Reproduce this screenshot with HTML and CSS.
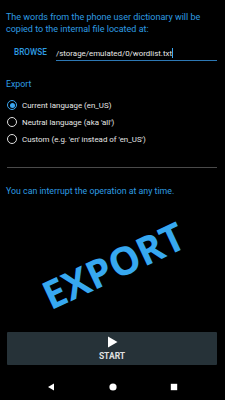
FILE: index.html
```html
<!DOCTYPE html>
<html>
<head>
<meta charset="utf-8">
<link rel="stylesheet" href="styles.css">
</head>
<body>
<div class="screen">
  <div class="content">
    <p class="intro">The words from the phone user dictionary will be copied to the internal file located at:</p>
    <div class="browse-row">
      <span class="browse">BROWSE</span>
      <span class="path">/storage/emulated/0/wordlist.txt<span class="caret"></span></span>
    </div>
    <div class="section">Export</div>
    <div class="radios">
      <div class="radio-row"><span class="radio checked"></span><span class="label">Current language (en_US)</span></div>
      <div class="radio-row"><span class="radio"></span><span class="label">Neutral language (aka 'all')</span></div>
      <div class="radio-row"><span class="radio"></span><span class="label">Custom (e.g. 'en' instead of 'en_US')</span></div>
    </div>
    <div class="divider"></div>
    <p class="note">You can interrupt the operation at any time.</p>
  </div>
  <div class="art"><span class="export">EXPORT</span></div>
  <div class="start">
    <svg class="play" width="11" height="12" viewBox="0 0 11 12"><path d="M1 0.5 L10.5 6 L1 11.5 Z" fill="#ffffff"/></svg>
    <span class="start-label">START</span>
  </div>
  <div class="nav">
    <svg width="8" height="8" viewBox="0 0 8 8"><path d="M7 0.5 L7 7.5 L1 4 Z" fill="#ffffff"/></svg>
    <svg width="8" height="8" viewBox="0 0 8 8"><circle cx="4" cy="4" r="3.6" fill="#ffffff"/></svg>
    <svg width="8" height="8" viewBox="0 0 8 8"><rect x="0.8" y="0.8" width="6.4" height="6.4" fill="#ffffff"/></svg>
  </div>
</div>
</body>
</html>
```
FILE: styles.css
```css
html, body {
  margin: 0;
  padding: 0;
  background: #000;
}
.screen {
  width: 225px;
  height: 400px;
  display: flex;
  flex-direction: column;
  font-family: Roboto, "Liberation Sans", sans-serif;
  overflow: hidden;
}
.content {
  padding: 11px 8px 0 6px;
}
.intro {
  margin: 0;
  color: #2e9de2;
  font-size: 9px;
  line-height: 12px;
}
.browse-row {
  display: flex;
  align-items: center;
  margin-top: 9px;
  height: 16px;
}
.browse {
  color: #2e9de2;
  font-size: 8.2px;
  font-weight: 500;
  width: 50px;
  padding-left: 8px;
  box-sizing: border-box;
}
.path {
  flex: 1;
  color: #e8e8e8;
  font-size: 7.9px;
  line-height: 13px;
  border-bottom: 1px solid #2d78b4;
  margin-top: 3px;
  display: flex;
  align-items: center;
}
.caret {
  display: inline-block;
  width: 1px;
  height: 10px;
  background: #3ba6f0;
}
.section {
  color: #2e9de2;
  font-size: 8.8px;
  margin-top: 18px;
  line-height: 12px;
}
.radios {
  margin-top: 9px;
  display: flex;
  flex-direction: column;
  gap: 5px;
  padding-left: 1px;
}
.radio-row {
  display: flex;
  align-items: center;
  height: 12px;
}
.radio {
  width: 8px;
  height: 8px;
  border: 1.6px solid #e0e0e0;
  border-radius: 50%;
  margin-right: 5px;
  position: relative;
  flex: none;
}
.radio.checked {
  border-color: #3ba6f0;
}
.radio.checked::after {
  content: "";
  position: absolute;
  left: 1.5px;
  top: 1.5px;
  width: 5px;
  height: 5px;
  border-radius: 50%;
  background: #3ba6f0;
}
.label {
  color: #e6e6e6;
  font-size: 7.9px;
}
.divider {
  margin-top: 22px;
  margin-left: 1px;
  height: 1px;
  background: #4a4a4a;
}
.note {
  margin: 17px 0 0 0;
  color: #2e9de2;
  font-size: 8.8px;
  line-height: 12px;
}
.art {
  flex: 1;
  display: flex;
  align-items: center;
  justify-content: center;
  padding-top: 0;
}
.export {
  font-family: "Open Sans", sans-serif;
  font-weight: 700;
  font-size: 39px;
  color: #37a8f0;
  transform: rotate(-25deg);
}
.start {
  margin: 0 8px 0 7px;
  height: 33px;
  background: #263238;
  display: flex;
  flex-direction: column;
  align-items: center;
  justify-content: center;
  gap: 3px;
  border-radius: 1px;
}
.play {
  display: block;
}
.start-label {
  color: #e0e0e0;
  font-size: 8.5px;
  font-weight: 700;
  line-height: 10px;
}
.nav {
  height: 35px;
  display: flex;
  justify-content: space-between;
  align-items: center;
  padding: 8px 47px 0 47px;
  box-sizing: border-box;
}
.nav svg {
  display: block;
}
```
